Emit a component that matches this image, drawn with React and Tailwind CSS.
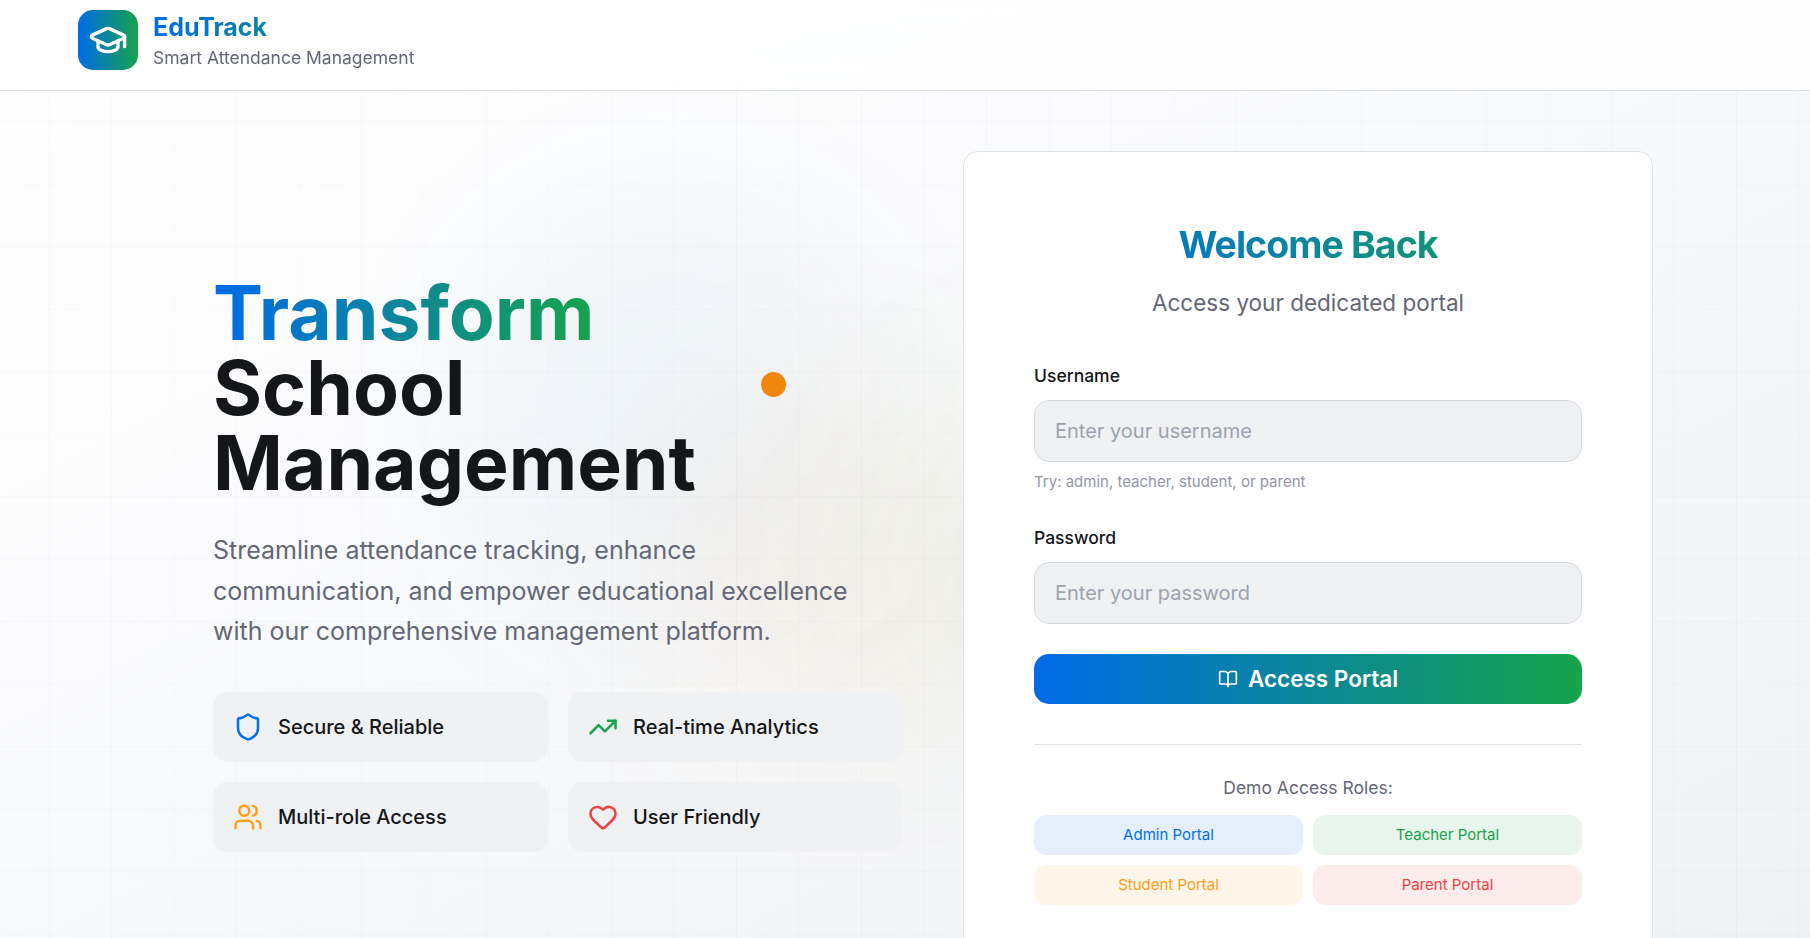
import React from "react";
import { GraduationCap, Shield, TrendingUp, Users, Heart, BookOpen } from "lucide-react";

const features = [
  { icon: Shield, label: "Secure & Reliable", color: "text-[#006fee]" },
  { icon: TrendingUp, label: "Real-time Analytics", color: "text-[#17a34a]" },
  { icon: Users, label: "Multi-role Access", color: "text-[#ff9f1a]" },
  { icon: Heart, label: "User Friendly", color: "text-[#ef4343]" },
];

const roles = [
  { label: "Admin Portal", style: "bg-[#e5effc] text-[#006fee]" },
  { label: "Teacher Portal", style: "bg-[#e7f5ec] text-[#17a34a]" },
  { label: "Student Portal", style: "bg-[#fff5e8] text-[#ff9f1a]" },
  { label: "Parent Portal", style: "bg-[#fdecec] text-[#ef4343]" },
];

function Header() {
  return (
    <header className="relative flex h-[91px] shrink-0 items-start border-b border-[#dfe3e7] bg-white/80 pt-2.5 pl-[78px] backdrop-blur-md">
      <div className="flex items-start gap-[15px]">
        <div className="flex size-[60px] items-center justify-center rounded-[15px] bg-linear-to-r/srgb from-[#006be8] to-[#17a34a] text-white">
          <GraduationCap size={40} />
        </div>
        <div>
          <h1 className="bg-linear-to-r/srgb from-[#006be8] to-[#17a34a] bg-clip-text text-[25px] leading-[35px] font-bold text-transparent">EduTrack</h1>
          <p className="text-[17.5px] leading-[25px] text-[#646776]">Smart Attendance Management</p>
        </div>
      </div>
    </header>
  );
}

function Field({ label, placeholder, type }) {
  return (
    <div>
      <label className="block text-[17.5px] leading-[24px] font-medium text-[#15161a]">{label}</label>
      <input
        type={type}
        placeholder={placeholder}
        className="mt-3 block h-[62px] w-full rounded-[15px] border border-[#d5dae1] bg-[#f0f1f3] px-5 text-[20px] placeholder:text-[#9ca3af]"
      />
    </div>
  );
}

export default function App() {
  return (
    <div className="relative flex h-[938px] flex-col overflow-hidden bg-linear-to-br/srgb from-white via-[#f8f9fb] to-[#f0f1f3] font-['Inter',sans-serif] text-[#15161a]">
      <div className="absolute inset-0 bg-[linear-gradient(#0000000a_1px,transparent_1px),linear-gradient(90deg,#0000000a_1px,transparent_1px)] bg-[size:62.5px_62.5px] bg-[position:48.5px_58.75px] opacity-50" />
      <div className="absolute top-[200px] left-[460px] size-[420px] rounded-full bg-[#1a6fb0]/[0.045] blur-[80px]" />
      <div className="absolute top-[370px] left-[650px] size-[380px] rounded-full bg-[#ff8f1a]/[0.055] blur-[70px]" />
      <div className="absolute top-[360px] left-[860px] size-[400px] rounded-full bg-[#17a34a]/[0.035] blur-[80px]" />
      <Header />
      <main className="relative flex items-start gap-[60px] pt-[60px] pl-[213px]">
        <section className="w-[690px] pt-[124px]">
          <h2 className="text-[75px] leading-[75px] font-bold">
            <span className="block w-fit bg-linear-to-r/srgb from-[#006be8] to-[#17a34a] bg-clip-text text-transparent">Transform</span>
            <span className="block">School</span>
            <span className="block">Management</span>
          </h2>
          <p className="mt-[30px] text-[25px] leading-[40.625px] text-[#646776]">
            Streamline attendance tracking, enhance
            <br />
            communication, and empower educational excellence
            <br />
            with our comprehensive management platform.
          </p>
          <div className="mt-10 grid grid-cols-2 gap-5">
            {features.map(({ icon: Icon, label, color }) => (
              <div key={label} className="flex h-[70px] items-center gap-[15px] rounded-[15px] bg-[#f0f1f3] px-5">
                <Icon size={30} className={color} />
                <span className="text-[20px] font-medium">{label}</span>
              </div>
            ))}
          </div>
        </section>
        <section className="h-[860px] w-[690px] rounded-[15px] border border-[#dfe3e8] bg-white px-[70px] pt-[70px]">
          <h3 className="bg-linear-to-r/srgb from-[#006be8] to-[#17a34a] bg-clip-text text-center text-[37.5px] leading-[45px] font-bold tracking-tight text-transparent">Welcome Back</h3>
          <p className="mt-[18px] text-center text-[22.5px] leading-[35px] text-[#646776]">Access your dedicated portal</p>
          <div className="mt-11">
            <Field label="Username" placeholder="Enter your username" type="text" />
            <p className="mt-2.5 text-[15px] leading-5 text-[#9395a5]">Try: admin, teacher, student, or parent</p>
          </div>
          <div className="mt-[34px]">
            <Field label="Password" placeholder="Enter your password" type="password" />
          </div>
          <button className="mt-[30px] flex h-[50px] w-full items-center justify-center gap-2.5 rounded-[15px] bg-linear-to-r/srgb from-[#006be8] to-[#17a34a] text-[22.5px] font-semibold text-white">
            <BookOpen size={20} />
            Access Portal
          </button>
          <div className="mt-10 border-t border-[#dfe3e8] pt-[30px]">
            <p className="text-center text-[17.5px] leading-[25px] text-[#646776]">Demo Access Roles:</p>
            <div className="mt-[15px] grid grid-cols-2 gap-2.5">
              {roles.map(({ label, style }) => (
                <div key={label} className={`flex h-10 items-center justify-center rounded-[12.5px] text-[15px] ${style}`}>{label}</div>
              ))}
            </div>
          </div>
        </section>
      </main>
      <div className="absolute top-[372px] left-[761px] size-[25px] rounded-full bg-[#f0870c]" />
    </div>
  );
}
